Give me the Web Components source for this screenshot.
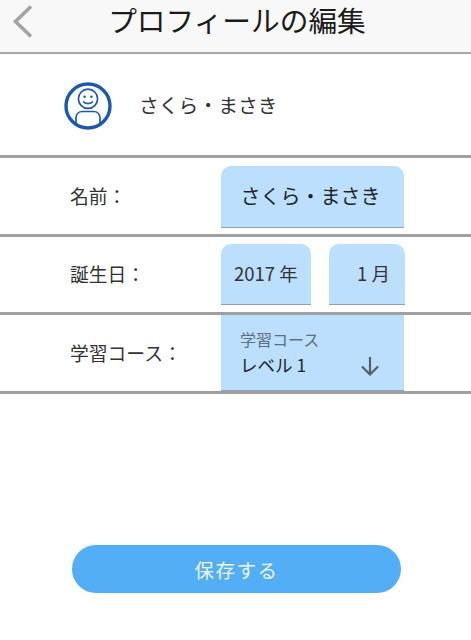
<!DOCTYPE html>
<html lang="ja">
<head>
<meta charset="utf-8">
<title>プロフィールの編集</title>
<style>
  html, body { margin: 0; height: 100%; background: #fff; }
  body { font-family: "Noto Sans CJK JP", "Noto Sans", sans-serif; color: #2b2b2b; }
</style>
</head>
<body>
<profile-page>
  <app-header title="プロフィールの編集"></app-header>
  <profile-summary name="さくら・まさき"></profile-summary>
  <form-row label="名前：" height="79"><text-field>さくら・まさき</text-field></form-row>
  <form-row label="誕生日：" height="78">
    <date-field>2017 年</date-field>
    <date-field align="end">1 月</date-field>
  </form-row>
  <form-row label="学習コース：" height="79"><select-field label="学習コース" value="レベル 1"></select-field></form-row>
  <save-button slot="footer">保存する</save-button>
</profile-page>

<script>
// Small helper so every element below only has to declare its styles and markup
function shadow(el, css, html) {
  el.attachShadow({ mode: 'open' }).innerHTML = `<style>${css}</style>${html}`;
}

class ProfilePage extends HTMLElement {
  connectedCallback() {
    shadow(this, `
      :host { display: flex; flex-direction: column; height: 640px; }
      .footer { margin-top: auto; padding: 0 70px 47px 72px; }
    `, `<slot></slot><div class="footer"><slot name="footer"></slot></div>`);
  }
}

class AppHeader extends HTMLElement {
  connectedCallback() {
    shadow(this, `
      :host {
        display: flex; align-items: center; justify-content: center;
        box-sizing: border-box; height: 54px; position: relative;
        background: #f8f8f8; border-bottom: 2px solid #a9a9a9;
      }
      svg { position: absolute; left: 12px; top: 4px; }
      h1 { margin: -11px 0 0 3px; font-size: 28.7px; font-weight: 400; color: #1b1b1b; line-height: 1; }
    `, `
      <svg width="22" height="34" viewBox="0 0 22 34" fill="none">
        <path d="M19 2.5 3.5 17.5 19 32.5" stroke="#a3a3a3" stroke-width="3.6"/>
      </svg>
      <h1>${this.getAttribute('title')}</h1>
    `);
  }
}

class ProfileSummary extends HTMLElement {
  connectedCallback() {
    shadow(this, `
      :host {
        display: flex; align-items: center; gap: 27px;
        box-sizing: border-box; height: 104px; padding: 3px 0 0 64px;
        border-bottom: 3px solid #a0a0a0;
      }
      svg { display: block; flex: none; }
      span { margin-top: -4px; font-size: 19.8px; color: #333; }
    `, `
      <svg width="48" height="48" viewBox="0 0 48 48" fill="none" stroke="#1f57ad">
        <circle cx="24" cy="24" r="22" stroke-width="3.4"/>
        <circle cx="24" cy="16.8" r="9.6" stroke-width="1.7"/>
        <circle cx="20.6" cy="14.8" r="1.2" fill="#1f57ad" stroke="none"/>
        <circle cx="27.4" cy="14.8" r="1.2" fill="#1f57ad" stroke="none"/>
        <path d="M19 19.5c2.3 2.800 7.700 2.800 10 0" stroke-width="1.6"/>
        <path d="M12 41v-5c0-4 2.800-6.500 6.500-6.500h11c3.700 0 6.500 2.500 6.500 6.500v5" stroke-width="1.7"/>
      </svg>
      <span>${this.getAttribute('name')}</span>
    `);
  }
}

class FormRow extends HTMLElement {
  connectedCallback() {
    shadow(this, `
      :host {
        display: grid; grid-template-columns: 151px 1fr;
        box-sizing: border-box; padding-left: 70px;
        height: ${this.getAttribute('height')}px;
        border-bottom: 3px solid #a0a0a0;
      }
      .label { align-self: center; margin-top: -2px; font-size: 18.8px; color: #333; white-space: nowrap; }
      .fields { display: flex; gap: 18px; align-items: flex-start; }
    `, `<div class="label">${this.getAttribute('label')}</div><div class="fields"><slot></slot></div>`);
  }
}

class TextField extends HTMLElement {
  connectedCallback() {
    shadow(this, `
      :host {
        display: flex; align-items: center; justify-content: center;
        box-sizing: border-box; width: 183px; height: 62px; margin-top: 8px;
        padding: 0 4px 2px 0;
        background: #bbdffd; border-radius: 10px 10px 0 0;
        border-bottom: 1.5px solid #8fa3b3;
        font-size: 20px; color: #222;
      }
    `, `<slot></slot>`);
  }
}

class DateField extends HTMLElement {
  connectedCallback() {
    const end = this.getAttribute('align') === 'end';
    shadow(this, `
      :host {
        display: flex; align-items: center;
        justify-content: ${end ? 'flex-end' : 'flex-start'};
        box-sizing: border-box; height: 61px; margin-top: 7px;
        width: ${end ? 76 : 90}px;
        padding: 0 ${end ? 15 : 0}px 2px ${end ? 0 : 13}px;
        background: #bbdffd; border-radius: 10px 10px 0 0;
        border-bottom: 1.5px solid #8fa3b3;
        font-size: 18.5px; color: #333;
      }
    `, `<slot></slot>`);
  }
}

class SelectField extends HTMLElement {
  connectedCallback() {
    shadow(this, `
      :host {
        display: block; position: relative; box-sizing: border-box;
        width: 183px; height: 76px; padding: 13px 0 0 19px;
        background: #bbdffd; border-bottom: 1px solid #8fa3b3;
      }
      .label { font-size: 16px; line-height: 22px; color: #5d6f7d; }
      .value { font-size: 17.5px; line-height: 26px; margin-top: 2px; color: #1d2730; }
      svg { position: absolute; right: 24px; top: 41px; }
    `, `
      <div class="label">${this.getAttribute('label')}</div>
      <div class="value">${this.getAttribute('value')}</div>
      <svg width="20" height="20" viewBox="0 0 20 20" fill="none" stroke="#555f66" stroke-width="2.2">
        <path d="M10 1v17M2 10.500 10 18.500 18 10.500"/>
      </svg>
    `);
  }
}

class SaveButton extends HTMLElement {
  connectedCallback() {
    shadow(this, `
      :host {
        display: flex; align-items: center; justify-content: center;
        height: 48px; border-radius: 24px; background: #53aef5;
        color: #eef7fe; font-size: 19.5px; letter-spacing: 1.5px;
      }
    `, `<slot></slot>`);
  }
}

customElements.define('profile-page', ProfilePage);
customElements.define('app-header', AppHeader);
customElements.define('profile-summary', ProfileSummary);
customElements.define('form-row', FormRow);
customElements.define('text-field', TextField);
customElements.define('date-field', DateField);
customElements.define('select-field', SelectField);
customElements.define('save-button', SaveButton);
</script>
</body>
</html>
